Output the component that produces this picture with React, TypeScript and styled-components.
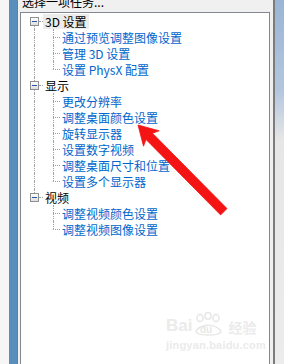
import styled, { createGlobalStyle } from "styled-components";

const GlobalStyle = createGlobalStyle`
  html, body {
    margin: 0;
    padding: 0;
    overflow: hidden;
    background: #f0f0f0;
  }
  body {
    font-family: "Noto Sans CJK SC", "Noto Sans", sans-serif;
  }
`;

const Page = styled.div`
  position: relative;
  display: flex;
  width: 284px;
  height: 364px;
  overflow: hidden;
`;

const LeftEdge = styled.div`
  width: 9px;
  background: #f6f6f6;
`;

const SideBar = styled.div`
  width: 8px;
  background: #5a8fbd;
`;

const EdgeLine = styled.div<{ $width: number }>`
  width: ${(p) => p.$width}px;
  background: #7c7c7c;
`;

const RightStrip = styled.div`
  width: 9px;
  background: linear-gradient(#9ab5d6 0px, #b3c6de 90px, #e6e6e6 140px, #ececec 100%);
`;

const Panel = styled.div`
  width: 250px;
  padding: 0 3px 0 2px;
  display: flex;
  flex-direction: column;
  background: #f0f0f0;
`;

const Caption = styled.div`
  flex-shrink: 0;
  height: 12px;
  padding-left: 2px;
  overflow: hidden;
  font-size: 12px;
  line-height: 12px;
  color: #000;
  white-space: nowrap;
`;

const CaptionText = styled.div`
  margin-top: -4px;
`;

const TreeBox = styled.div`
  height: 400px;
  flex-shrink: 0;
  background: #fff;
  border: 1px solid #828790;
  padding-left: 3px;
`;

const Row = styled.div`
  display: flex;
  height: 16px;
`;

const ExpanderCell = styled.div`
  width: 19px;
  display: grid;
  grid-template-columns: 6px 9px 4px;
  grid-template-rows: 1fr 9px 1fr;
`;

const Stem = styled.div<{ $row: number; $show: boolean }>`
  grid-row: ${(p) => p.$row};
  grid-column: 2;
  justify-self: center;
  width: 0;
  border-left: ${(p) => (p.$show ? "1px dotted #a0a0a0" : "none")};
`;

const Stub = styled.div`
  grid-row: 2;
  grid-column: 3;
  align-self: center;
  height: 0;
  border-top: 1px dotted #a0a0a0;
`;

const ToggleBox = styled.div`
  grid-row: 2;
  grid-column: 2;
  box-sizing: border-box;
  border: 1px solid #919191;
  background: linear-gradient(#ffffff, #dedede);
  display: flex;
  align-items: center;
  justify-content: center;
`;

const Minus = styled.div`
  width: 5px;
  height: 1px;
  background: #2a56a8;
`;

const GuideCell = styled.div<{ $width: number }>`
  width: ${(p) => p.$width}px;
  display: grid;
  grid-template-columns: 10px 1fr;
  grid-template-rows: 8px 8px;
`;

const GuideTop = styled.div<{ $line: boolean }>`
  grid-row: 1;
  grid-column: 2;
  border-left: ${(p) => (p.$line ? "1px dotted #a0a0a0" : "none")};
`;

const GuideBottom = styled.div<{ $line: boolean; $branch: boolean }>`
  grid-row: 2;
  grid-column: 2;
  border-left: ${(p) => (p.$line ? "1px dotted #a0a0a0" : "none")};
  border-top: ${(p) => (p.$branch ? "1px dotted #a0a0a0" : "none")};
`;

const Label = styled.div<{ $child?: boolean; $selected?: boolean }>`
  align-self: center;
  height: 15px;
  padding: 0 2px;
  font-size: 12px;
  line-height: 15px;
  white-space: nowrap;
  color: ${(p) => (p.$child ? "#0066cc" : "#000")};
  background: ${(p) => (p.$selected ? "#ececec" : "transparent")};
`;

const Overlay = styled.svg`
  position: absolute;
  left: 0;
  top: 0;
  pointer-events: none;
`;

const Watermark = styled.div`
  position: absolute;
  left: 166px;
  top: 310px;
  color: #ebebeb;
  font-family: "Liberation Sans", sans-serif;
  display: flex;
  flex-direction: column;
  align-items: flex-start;
`;

const MarkTop = styled.div`
  display: flex;
  align-items: flex-end;
  font-size: 17px;
  font-weight: bold;
  line-height: 20px;
  height: 26px;
`;

const MarkCjk = styled.span`
  font-family: "Noto Sans CJK SC", sans-serif;
  font-size: 14px;
  line-height: 18px;
  margin-left: 2px;
`;

const MarkUrl = styled.div`
  font-size: 11px;
  font-weight: bold;
  margin-top: 3px;
  letter-spacing: 0.2px;
`;

type Kind = "pipe" | "tee" | "elbow" | "blank";

const Guide = ({ kind, width }: { kind: Kind; width: number }) => (
  <GuideCell $width={width}>
    <GuideTop $line={kind !== "blank"} />
    <GuideBottom $line={kind === "pipe" || kind === "tee"} $branch={kind === "tee" || kind === "elbow"} />
  </GuideCell>
);

const tree = [
  {
    label: "3D 设置",
    selected: true,
    children: ["通过预览调整图像设置", "管理 3D 设置", "设置 PhysX 配置"],
  },
  {
    label: "显示",
    children: [
      "更改分辨率",
      "调整桌面颜色设置",
      "旋转显示器",
      "设置数字视频",
      "调整桌面尺寸和位置",
      "设置多个显示器",
    ],
  },
  {
    label: "视频",
    children: ["调整视频颜色设置", "调整视频图像设置"],
  },
];

const App = () => {
  return (
    <>
      <GlobalStyle />
      <Page>
        <LeftEdge />
        <SideBar />
        <EdgeLine $width={1} />
        <Panel>
          <Caption>
            <CaptionText>选择一项任务...</CaptionText>
          </Caption>
          <TreeBox>
            {tree.map((group, gi) => {
              const hasNext = gi < tree.length - 1;
              return (
                <div key={group.label}>
                  <Row>
                    <ExpanderCell>
                      <Stem $row={1} $show={gi > 0} />
                      <ToggleBox>
                        <Minus />
                      </ToggleBox>
                      <Stem $row={3} $show={hasNext} />
                      <Stub />
                    </ExpanderCell>
                    <Label $selected={group.selected}>{group.label}</Label>
                  </Row>
                  {group.children.map((child, ci) => (
                    <Row key={child}>
                      <Guide kind={hasNext ? "pipe" : "blank"} width={19} />
                      <Guide kind={ci < group.children.length - 1 ? "tee" : "elbow"} width={17} />
                      <Label $child>{child}</Label>
                    </Row>
                  ))}
                </div>
              );
            })}
          </TreeBox>
        </Panel>
        <EdgeLine $width={2} />
        <RightStrip />
        <Watermark>
          <MarkTop>
            Bai
            <svg width="34" height="24" viewBox="0 0 34 24">
              <g fill="none" stroke="#e8e8e8" strokeWidth="1.6">
                <ellipse cx="8" cy="6" rx="3" ry="3.6" />
                <ellipse cx="16" cy="3.8" rx="3" ry="3.4" />
                <ellipse cx="24" cy="6" rx="3" ry="3.6" />
                <path d="M4 20 C 6 11, 26 11, 29 20 C 27 24, 6 24, 4 20 Z" />
              </g>
              <text x="8" y="21" fontSize="10" fill="#e8e8e8" fontFamily="Liberation Sans" fontWeight="bold">
                du
              </text>
            </svg>
            <MarkCjk>经验</MarkCjk>
          </MarkTop>
          <MarkUrl>jingyan.baidu.com</MarkUrl>
        </Watermark>
        <Overlay width="284" height="364" viewBox="0 0 284 364">
          <polygon
            points="138,125 159.2,130.8 152.5,133.2 227,208.6 220.6,214.9 146,139.5 143.5,146.2"
            fill="#f41414"
            stroke="#f41414"
            strokeWidth="0.8"
            strokeLinejoin="round"
          />
        </Overlay>
      </Page>
    </>
  );
};

export default App;
